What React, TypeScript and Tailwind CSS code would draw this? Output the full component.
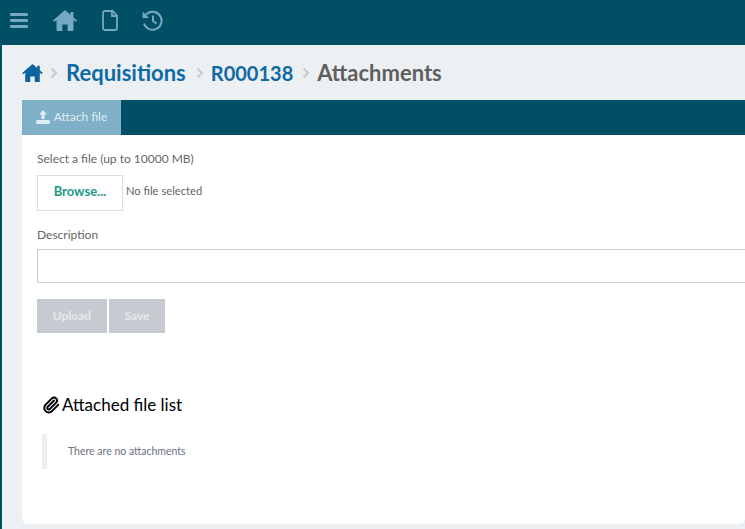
import { Paperclip } from "lucide-react";

const font = "font-['Lato','Liberation_Sans',sans-serif]";

const House = ({ className }: { className: string }) => (
  <svg className={className} viewBox="0 0 24 21" fill="currentColor">
    <path d="M12 0 L17.5 4.8 V2 H20.5 V7.4 L24 10.5 L22.8 12 L20.5 10 V20 a1 1 0 0 1-1 1 H14.6 V14.5 H9.4 V21 H4.5 a1 1 0 0 1-1-1 V10 L1.2 12 L0 10.5 Z" />
  </svg>
);

const Chevron = () => (
  <svg className="text-[#c6cacf]" width="8" height="12" viewBox="0 0 8 12" fill="none" stroke="currentColor" strokeWidth="2">
    <path d="M1.5 1.5 L6 6 L1.5 10.5" />
  </svg>
);

const TopBar = () => (
  <div className="flex h-[45px] items-center bg-[#004f65] pb-[4px] pl-[8px] text-[#74a9c1]">
    <svg width="18" height="17" viewBox="0 0 18 17" fill="currentColor">
      <rect y="1" width="18" height="3" rx="1" />
      <rect y="7" width="18" height="3" rx="1" />
      <rect y="13" width="18" height="3" rx="1" />
    </svg>
    <House className="ml-[25px] h-[21px] w-[24px]" />
    <svg className="ml-[25px]" width="16" height="21" viewBox="0 0 16 21" fill="none" stroke="currentColor" strokeWidth="1.8">
      <path d="M3 1h7.5L15 5.5V18a2 2 0 0 1-2 2H3a2 2 0 0 1-2-2V3a2 2 0 0 1 2-2z" />
      <path d="M10 1v5h5" />
    </svg>
    <svg className="ml-[24px]" width="21" height="21" viewBox="0 0 21 21" fill="none" stroke="currentColor" strokeWidth="2">
      <path d="M4 4.6A9 9 0 1 1 2 13.5" />
      <path d="M0.6 1.5 L0.6 8 L7 8 Z" fill="currentColor" stroke="none" />
      <path d="M11 5.5v5.5l3.5 2.5" />
    </svg>
  </div>
);

const Crumbs = () => (
  <div className="flex h-[55px] items-center text-[22px] font-bold">
    <House className="mr-[7px] h-[18px] w-[21px] text-[#0b639f]" />
    <Chevron />
    <span className="ml-[8px] mr-[10px] text-[#0f6aa6]">Requisitions</span>
    <Chevron />
    <span className="ml-[7px] mr-[9px] text-[20px] text-[#0f6aa6]">R000138</span>
    <Chevron />
    <span className="ml-[7px] text-[#5f5f5f]">Attachments</span>
  </div>
);

export default function App() {
  return (
    <div className={`${font} h-[529px] w-[745px] overflow-hidden border-l-2 border-[#004f65] bg-[#edf0f2]`}>
      <TopBar />
      <div className="pl-[20px]">
        <Crumbs />
        <div className="flex h-[35px] bg-[#004f65]">
          <div className="flex w-[99px] items-center justify-center gap-[4px] bg-[#7fb0c7] pb-[2px] text-[12px] text-[#dfecf2]">
            <svg width="14" height="14" viewBox="0 0 14 14" fill="currentColor">
              <path d="M7 0 L11 4.5 H8.6 V9 H5.4 V4.5 H3 Z" />
              <rect x="0" y="10" width="14" height="4" rx="1.5" />
            </svg>
            <span>Attach file</span>
          </div>
        </div>
        <div className="h-[389px] overflow-hidden rounded-b-md bg-white pl-[15px] pt-[16px] text-[#666]">
          <div className="text-[12px] leading-[16px]">Select a file (up to 10000 MB)</div>
          <div className="mt-[8px] flex items-center">
            <div className="flex h-[36px] w-[86px] items-center justify-center border border-[#ddd] pb-[2px] text-[13px] font-bold text-[#1c9a88]">
              Browse...
            </div>
            <span className="mb-[4px] ml-[3px] text-[11.2px]">No file selected</span>
          </div>
          <div className="mt-[16px] text-[12px] leading-[16px]">Description</div>
          <div className="mt-[6px] -mr-[10px] h-[34px] border border-[#ccc]" />
          <div className="mt-[16px] flex gap-[2px] text-[12px] font-bold text-[#e6e9ec]">
            <div className="flex h-[34px] w-[70px] items-center justify-center bg-[#c6cbd2]">Upload</div>
            <div className="flex h-[34px] w-[56px] items-center justify-center bg-[#c6cbd2]">Save</div>
          </div>
          <div className="mt-[60px] ml-[5px] flex h-[24px] items-center gap-[2px] text-[17px] text-black">
            <Paperclip size={18} strokeWidth={2.6} />
            <span>Attached file list</span>
          </div>
          <div className="mt-[17px] ml-[5px] flex h-[35px] items-center border-l-[5px] border-[#eee] pl-[21px] text-[10.5px] text-[#6b7280]">
            There are no attachments
          </div>
        </div>
      </div>
    </div>
  );
}
